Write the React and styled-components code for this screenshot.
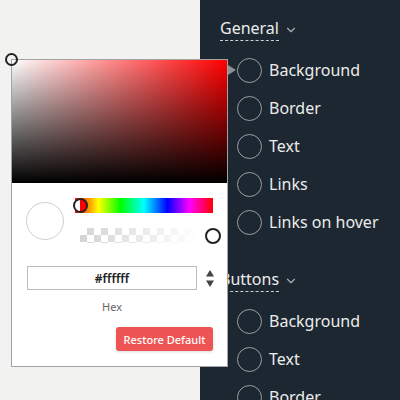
import React from 'react'
import styled, { createGlobalStyle } from 'styled-components'
import { ChevronDown } from 'lucide-react'

const GlobalStyle = createGlobalStyle`
  html, body {
    margin: 0;
    padding: 0;
    width: 400px;
    height: 400px;
    overflow: hidden;
    font-family: "Noto Sans", "DejaVu Sans", sans-serif;
  }
`

const Page = styled.div`
  position: relative;
  display: grid;
  grid-template-columns: 200px 1fr;
  width: 400px;
  height: 400px;
  overflow: hidden;
  background: #f2f2f0;
`

const Canvas = styled.div`
  background: #f2f2f0;
`

const Sidebar = styled.div`
  background: #1c2731;
  padding: 18px 0 0 20px;
  color: #ececec;
  overflow: hidden;
`

const Section = styled.div`
  margin-bottom: 28px;
`

const Heading = styled.div`
  display: flex;
  align-items: center;
  gap: 5px;
  color: #aab0b5;
`

const HeadingText = styled.span`
  font-size: 16px;
  line-height: 20px;
  color: #ececec;
  padding-bottom: 2px;
  border-bottom: 1px dashed #d0d0d0;
`

const List = styled.ul`
  list-style: none;
  margin: 10px 0 0;
  padding: 0;
`

const Item = styled.li`
  display: flex;
  align-items: center;
  gap: 7px;
  height: 38px;
  padding-left: 17px;
  font-size: 16px;
`

const Swatch = styled.span`
  width: 23px;
  height: 23px;
  border-radius: 50%;
  border: 1.5px solid #9a9fa3;
  flex: none;
`

const Popover = styled.div`
  position: absolute;
  left: 11px;
  top: 59px;
  width: 215px;
  background: #fff;
  border: 1px solid #a3a3a3;

  &::after {
    content: '';
    position: absolute;
    right: -9px;
    top: 5px;
    border-style: solid;
    border-width: 5px 0 5px 8px;
    border-color: transparent transparent transparent #8c9194;
  }
`

const Saturation = styled.div`
  position: relative;
  height: 123px;
  background: linear-gradient(to top, #000, rgba(0, 0, 0, 0)),
    linear-gradient(to right, #fff, #f00);
`

const Thumb = styled.span`
  position: absolute;
  box-sizing: border-box;
  width: ${({ size }) => size}px;
  height: ${({ size }) => size}px;
  border-radius: 50%;
  border: 2px solid #222;
  background: ${({ fill }) => fill || 'transparent'};
  left: ${({ x }) => x}px;
  top: ${({ y }) => y}px;
`

const Body = styled.div`
  padding: 15px 14px 15px 14px;
`

const Controls = styled.div`
  display: grid;
  grid-template-columns: 38px 1fr;
  column-gap: 11px;
  align-items: start;
`

const Preview = styled.span`
  box-sizing: border-box;
  width: 38px;
  height: 38px;
  margin-top: 4px;
  border-radius: 50%;
  border: 1px solid #cfcfcf;
  background: #fff;
`

const Sliders = styled.div`
  display: flex;
  flex-direction: column;
  gap: 15px;
`

const Track = styled.div`
  position: relative;
  height: 15px;
`

const Hue = styled(Track)`
  background: linear-gradient(
    to right,
    #f00 0%,
    #ff0 17%,
    #0f0 33%,
    #0ff 50%,
    #00f 67%,
    #f0f 83%,
    #f00 100%
  );
`

const Alpha = styled(Track)`
  margin: 0 8px 0 5px;
  background: linear-gradient(to right, rgba(255, 255, 255, 0.1), #fff 95%),
    repeating-conic-gradient(#cfcfcf 0 25%, #fff 0 50%) 0 0 / 14px 14px;
`

const HexRow = styled.div`
  display: flex;
  align-items: center;
  gap: 9px;
  margin-top: 23px;
  padding-left: 1px;
`

const HexInput = styled.input`
  box-sizing: border-box;
  width: 170px;
  height: 24px;
  border: 1px solid #bdbdbd;
  font-family: "Noto Sans", sans-serif;
  font-size: 12px;
  font-weight: 600;
  color: #222;
  text-align: center;
  outline: none;
`

const Spinner = styled.svg`
  flex: none;
`

const HexLabel = styled.div`
  width: 172px;
  margin-top: 9px;
  text-align: center;
  font-size: 11px;
  color: #666;
`

const Footer = styled.div`
  display: flex;
  justify-content: flex-end;
  margin-top: 13px;
`

const RestoreButton = styled.button`
  width: 97px;
  height: 24px;
  border: none;
  border-radius: 3px;
  background: #ef5454;
  color: #fff;
  font-family: "Noto Sans", sans-serif;
  font-size: 11px;
  font-weight: 500;
  box-shadow: 0 1px 3px rgba(0, 0, 0, 0.15);
  padding: 0;
`

const groups = [
  { title: 'General', items: ['Background', 'Border', 'Text', 'Links', 'Links on hover'] },
  { title: 'Buttons', items: ['Background', 'Text', 'Border'] },
]

export default function App() {
  return (
    <>
      <GlobalStyle />
      <Page>
        <Canvas />
        <Sidebar>
          {groups.map((group) => (
            <Section key={group.title}>
              <Heading>
                <HeadingText>{group.title}</HeadingText>
                <ChevronDown size={14} strokeWidth={2} />
              </Heading>
              <List>
                {group.items.map((label) => (
                  <Item key={label}>
                    <Swatch />
                    {label}
                  </Item>
                ))}
              </List>
            </Section>
          ))}
        </Sidebar>

        <Popover>
          <Saturation>
            <Thumb size={13} x={-7} y={-7} />
          </Saturation>
          <Body>
            <Controls>
              <Preview />
              <Sliders>
                <Hue>
                  <Thumb size={15} x={-2} y={0} fill="linear-gradient(to right, #fff 50%, #f00 50%)" />
                </Hue>
                <Alpha>
                  <Thumb size={16} x={125} y={0} fill="#fff" />
                </Alpha>
              </Sliders>
            </Controls>
            <HexRow>
              <HexInput defaultValue="#ffffff" />
              <Spinner width="8" height="17" viewBox="0 0 8 17">
                <path d="M4 0 L8 6.5 H0 Z" fill="#444" />
                <path d="M4 17 L8 10.5 H0 Z" fill="#444" />
              </Spinner>
            </HexRow>
            <HexLabel>Hex</HexLabel>
            <Footer>
              <RestoreButton>Restore Default</RestoreButton>
            </Footer>
          </Body>
        </Popover>
      </Page>
    </>
  )
}
